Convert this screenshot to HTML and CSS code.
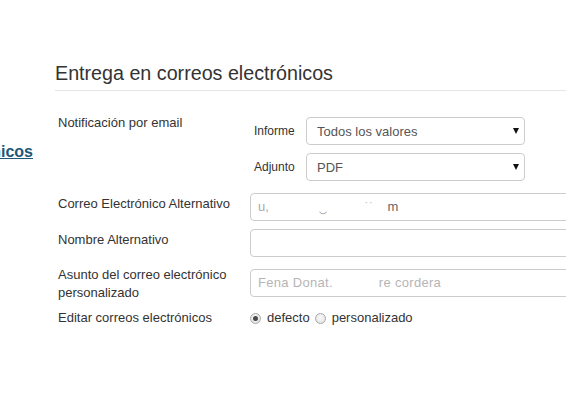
FILE: index.html
```html
<!DOCTYPE html>
<html lang="es">
<head>
    <meta charset="UTF-8">
    <meta name="viewport" content="width=device-width, initial-scale=1.0">
    <title>Entrega en correos electrónicos</title>
    <link rel="stylesheet" href="styles.css">
</head>
<body>
    <aside class="sidebar">
        <a class="side-link" href="#">Correos electrónicos</a>
    </aside>

    <main class="panel">
        <h2 class="panel-title">Entrega en correos electrónicos</h2>

        <div class="form">
            <div class="row row-notify">
                <div class="row-label">Notificación por email</div>
                <div class="sub-list">
                    <div class="sub-row">
                        <span class="sub-label">Informe</span>
                        <div class="select-wrap">
                            <select><option>Todos los valores</option></select>
                        </div>
                    </div>
                    <div class="sub-row">
                        <span class="sub-label">Adjunto</span>
                        <div class="select-wrap">
                            <select><option>PDF</option></select>
                        </div>
                    </div>
                </div>
            </div>

            <div class="row">
                <div class="row-label">Correo Electrónico Alternativo</div>
                <div class="field">
                    <span class="smudge">u,</span><span class="smudge at">‿</span><span class="smudge dots">˙˙</span><span class="smudge end">m</span>
                </div>
            </div>

            <div class="row">
                <div class="row-label">Nombre Alternativo</div>
                <div class="field"></div>
            </div>

            <div class="row row-subject">
                <div class="row-label">Asunto del correo electrónico<br>personalizado</div>
                <div class="field">
                    <span class="smudge faint">Fena Donat.</span><span class="smudge faint tail">re cordera</span>
                </div>
            </div>

            <div class="row row-radio">
                <div class="row-label">Editar correos electrónicos</div>
                <div class="radio-group">
                    <label class="radio"><span class="radio-dot checked"></span>defecto</label>
                    <label class="radio"><span class="radio-dot"></span>personalizado</label>
                </div>
            </div>
        </div>
    </main>
</body>
</html>
```

FILE: styles.css
```css
html, body {
    overflow: hidden;
}
body {
    margin: 0;
    font-family: "Liberation Sans", Arial, sans-serif;
    color: #333;
    background: #fff;
    display: flex;
    align-items: flex-start;
}
.sidebar {
    flex: none;
    width: 33px;
    margin-right: 22px;
    padding-top: 142px;
    display: flex;
    justify-content: flex-end;
    overflow: hidden;
}
.side-link {
    flex: none;
    white-space: nowrap;
    font-size: 16px;
    line-height: 20px;
    font-weight: bold;
    color: #1d5878;
    text-decoration: underline;
}
.panel {
    flex: none;
    width: 580px;
}
.panel-title {
    margin: 62px 0 0;
    padding-bottom: 6px;
    font-size: 19.7px;
    line-height: 22px;
    font-weight: normal;
    color: #333;
    border-bottom: 1px solid #e6e6e6;
}
.form {
    padding: 23px 0 0 3px;
}
.row {
    display: flex;
    align-items: flex-start;
    margin-bottom: 8px;
}
.row-label {
    flex: none;
    width: 192px;
    padding-top: 2px;
    font-size: 13px;
    line-height: 18px;
}
.row-notify {
    margin-bottom: 12px;
}
.row-notify .row-label {
    padding-top: 0;
}
.sub-list {
    padding-top: 3px;
    display: flex;
    flex-direction: column;
    gap: 8px;
}
.sub-row {
    display: flex;
    align-items: center;
}
.sub-label {
    width: 56px;
    padding-left: 4px;
    box-sizing: border-box;
    font-size: 12px;
}
.select-wrap {
    position: relative;
}
.select-wrap::after {
    content: "";
    position: absolute;
    right: 6px;
    top: 11px;
    border-left: 3px solid transparent;
    border-right: 3px solid transparent;
    border-top: 6px solid #111;
    pointer-events: none;
}
select {
    appearance: none;
    -webkit-appearance: none;
    width: 219px;
    height: 28px;
    margin: 0;
    padding: 0 10px;
    border: 1px solid #ccc;
    border-radius: 4px;
    background: #fff;
    font-family: inherit;
    font-size: 13px;
    color: #555;
    outline: none;
}
.field {
    flex: none;
    width: 330px;
    height: 28px;
    box-sizing: border-box;
    padding: 0 7px;
    border: 1px solid #ccc;
    border-radius: 4px;
    font-size: 13px;
    line-height: 26px;
    white-space: nowrap;
    color: #999;
}
.smudge {
    display: inline-block;
    color: #aaa;
}
.smudge.at {
    margin-left: 50px;
    color: #888;
}
.smudge.dots {
    margin-left: 38px;
    color: #bbb;
}
.smudge.end {
    margin-left: 14px;
    color: #666;
}
.smudge.faint {
    color: #b5b5b5;
    letter-spacing: 0.3px;
}
.smudge.tail {
    margin-left: 46px;
}
.row-subject {
    margin-bottom: 6px;
}
.row-subject .row-label {
    padding-top: 1px;
}
.row-subject .field {
    margin-top: 4px;
}
.row-radio .row-label {
    padding-top: 1px;
}
.radio-group {
    padding-top: 1px;
    display: flex;
    align-items: center;
    font-size: 13px;
    line-height: 18px;
}
.radio {
    display: flex;
    align-items: center;
    margin-right: 5px;
}
.radio-dot {
    width: 11px;
    height: 11px;
    box-sizing: border-box;
    margin-right: 6px;
    border: 1px solid #a8a8a8;
    border-radius: 50%;
    background: radial-gradient(circle at 50% 40%, #fafafa 0%, #dedede 100%);
    display: flex;
    align-items: center;
    justify-content: center;
}
.radio-dot.checked::after {
    content: "";
    width: 5px;
    height: 5px;
    border-radius: 50%;
    background: #4a4a4a;
}
```
